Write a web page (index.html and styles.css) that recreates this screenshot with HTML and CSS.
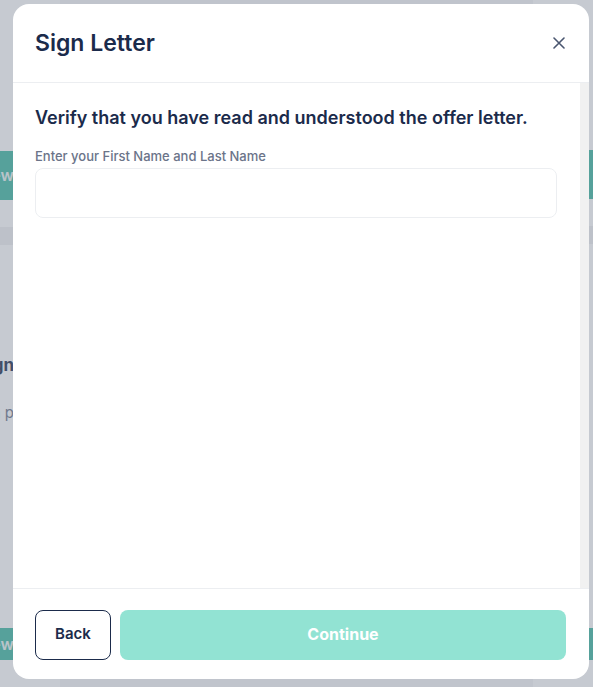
FILE: index.html
```html
<!DOCTYPE html>
<html>
<head>
<meta charset="utf-8">
<link rel="stylesheet" href="styles.css">
</head>
<body>
<div class="page">
  <div class="col col-left">
    <div class="bg-btn"><span>View</span></div>
    <div class="bg-band"></div>
    <div class="bg-title"><span>Sign</span></div>
    <div class="bg-text"><span>a p</span></div>
    <div class="spacer"></div>
    <div class="bg-btn bg-btn-bottom"><span>View</span></div>
  </div>
  <div class="col col-right">
    <div class="bg-small">Pass</div>
    <div class="bg-icon">O</div>
    <div class="bg-btn">Sa</div>
    <div class="bg-band"></div>
    <div class="bg-small bg-mid">s</div>
    <div class="bg-icon">O</div>
    <div class="spacer"></div>
    <div class="bg-btn bg-btn-bottom">Sa</div>
  </div>
</div>
<div class="overlay"></div>
<div class="modal">
  <div class="modal-header">
    <h2 class="modal-title">Sign Letter</h2>
    <button class="close-btn" aria-label="Close">
      <svg width="12" height="12" viewBox="0 0 12 12"><path d="M1 1L11 11M11 1L1 11" stroke="#4a5670" stroke-width="1.6" stroke-linecap="round" fill="none"/></svg>
    </button>
  </div>
  <div class="modal-body">
    <div class="body-content">
      <h3 class="verify">Verify that you have read and understood the offer letter.</h3>
      <label class="field-label">Enter your First Name and Last Name</label>
      <input class="field-input" type="text">
    </div>
    <div class="scrollbar"></div>
  </div>
  <div class="modal-footer">
    <button class="btn btn-back">Back</button>
    <button class="btn btn-continue">Continue</button>
  </div>
</div>
</body>
</html>
```
FILE: styles.css
```css
* { box-sizing: border-box; }
html, body { margin: 0; padding: 0; }
body {
  width: 593px;
  height: 687px;
  overflow: hidden;
  font-family: Inter, "Noto Sans", sans-serif;
  background: #f4f5f7;
  position: relative;
}
.page {
  display: flex;
  justify-content: space-between;
  height: 687px;
}
.col {
  display: flex;
  flex-direction: column;
  width: 60px;
  background: #ffffff;
}
.col-left { align-items: flex-end; padding-top: 151px; }
.col-right { align-items: flex-start; padding-left: 10px; }
.bg-btn {
  width: 60px;
  height: 49px;
  background: #3fb9a3;
  color: #e8f4f2;
  font-weight: 600;
  font-size: 16px;
  line-height: 49px;
  white-space: nowrap;
}
.col-left .bg-btn,
.col-left .bg-title,
.col-left .bg-text {
  display: flex;
  justify-content: flex-end;
  padding-right: 46px;
  white-space: nowrap;
}
.col-right .bg-btn { padding-left: 6px; }
.bg-band { width: 60px; height: 18px; margin-top: 27px; background: #f0f0f2; }
.bg-title { margin-top: 110px; font-weight: 700; font-size: 17px; color: #1b2b4b; width: 60px; }
.bg-text { margin-top: 28px; font-size: 15px; color: #6b7489; width: 60px; }
.spacer { flex: 1; }
.bg-btn-bottom { margin-bottom: 27px; height: 32px; line-height: 32px; }
.bg-small { font-size: 11px; color: #6b7489; padding-left: 4px; margin-top: 2px; height: 20px; }
.bg-icon { font-size: 12px; color: #1b2b4b; padding-left: 4px; height: 128px; }
.bg-mid { margin-top: 170px; height: 80px; }
.overlay {
  position: absolute;
  inset: 0;
  background: rgba(120, 128, 146, 0.42);
}
.modal {
  position: absolute;
  left: 13px;
  top: 4px;
  width: 576px;
  height: 675px;
  background: #ffffff;
  border-radius: 16px;
  display: flex;
  flex-direction: column;
  overflow: hidden;
}
.modal-header {
  height: 79px;
  flex: none;
  border-bottom: 1px solid #eceef1;
  display: flex;
  align-items: center;
  justify-content: space-between;
  padding: 0 23px 0 22px;
}
.modal-title {
  margin: 0;
  font-size: 23px;
  font-weight: 600;
  color: #1b2b4b;
}
.close-btn {
  border: 0;
  background: none;
  padding: 0;
  width: 12px;
  height: 12px;
  display: flex;
  cursor: pointer;
  margin-right: 1px;
}
.modal-body {
  flex: 1;
  display: flex;
  border-bottom: 1px solid #eceef1;
}
.body-content {
  flex: 1;
  padding: 23px 23px 0 22px;
}
.scrollbar {
  width: 9px;
  background: #f1f1f1;
  flex: none;
}
.verify {
  margin: 0;
  font-size: 18px;
  font-weight: 600;
  color: #1b2b4b;
  line-height: 24px;
}
.field-label {
  display: block;
  margin-top: 18px;
  font-size: 13px;
  font-weight: 500;
  color: #6b7489;
  line-height: 16px;
}
.field-input {
  display: block;
  margin-top: 4px;
  width: 522px;
  height: 50px;
  border: 1px solid #eceef1;
  border-radius: 8px;
  outline: none;
  font-family: inherit;
}
.modal-footer {
  height: 90px;
  flex: none;
  display: flex;
  gap: 9px;
  padding: 21px 23px 19px 22px;
}
.btn {
  height: 50px;
  border-radius: 8px;
  font-family: Inter, "Noto Sans", sans-serif;
  cursor: pointer;
  padding: 0 0 3px;
}
.btn-back {
  width: 76px;
  background: #fff;
  border: 1px solid #1b2b4b;
  color: #1b2b4b;
  font-size: 15px;
  font-weight: 600;
}
.btn-continue {
  flex: 1;
  border: 0;
  background: #92e3d3;
  color: #ffffff;
  font-size: 16px;
  font-weight: 700;
}
```
